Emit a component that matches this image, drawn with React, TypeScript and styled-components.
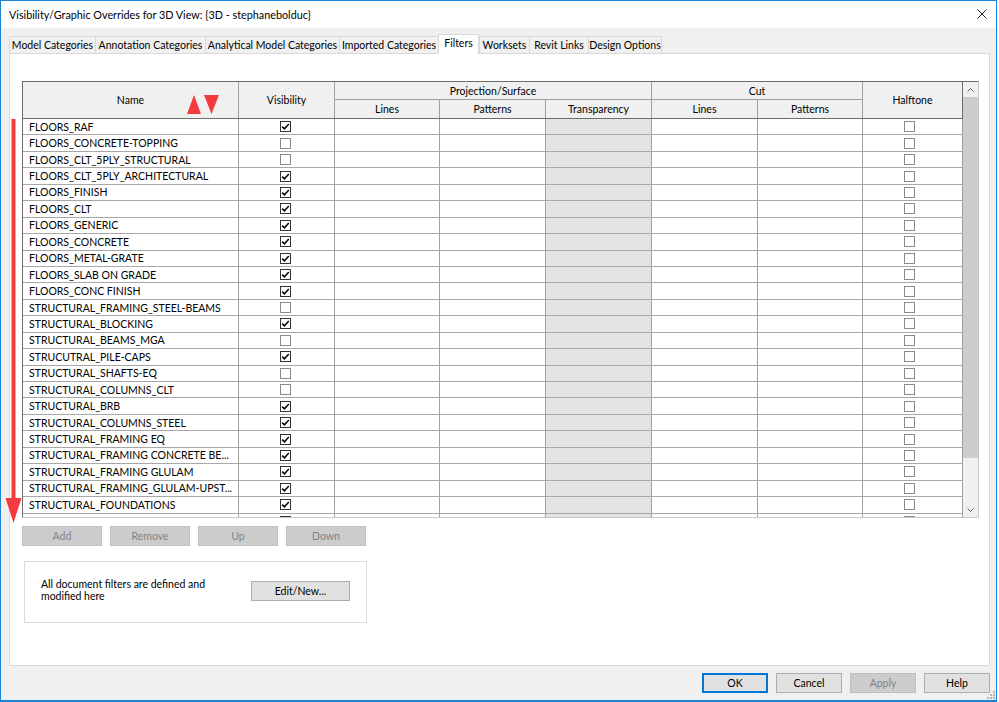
import React from "react";
import styled, { createGlobalStyle } from "styled-components";

const FONT = `Lato, "Liberation Sans", Arial, sans-serif`;
const FS = "10.5px";

const GlobalStyle = createGlobalStyle`
  html, body { margin: 0; padding: 0; background: #ffffff; }
  body { font-family: ${FONT}; font-size: ${FS}; color: #000; }
  * { box-sizing: border-box; }
`;

const COLS = [216, 96, 105, 106, 106, 106, 105, 100];
const GRID = COLS.map((c) => `${c}px`).join(" ");

const Window = styled.div`
  position: relative;
  width: 997px;
  height: 702px;
  border: 1px solid #1883d7;
  border-bottom-width: 2px;
  background: #f0f0f0;
  display: flex;
  flex-direction: column;
`;

const TitleBar = styled.div`
  flex: none;
  height: 27px;
  background: #ffffff;
  display: flex;
  align-items: center;
  justify-content: space-between;
  padding: 0 9px 1px 8px;
`;

const Title = styled.span`
  font-size: 10.8px;
  color: #000;
`;

const Body = styled.div`
  flex: 1;
  min-height: 0;
  display: flex;
  flex-direction: column;
  padding: 8px 6px 0 8px;
`;

const TabStrip = styled.div`
  flex: none;
  height: 17px;
  display: flex;
  align-items: flex-end;
  position: relative;
  z-index: 1;
`;

const Tab = styled.div<{ $w: number; $active?: boolean }>`
  width: ${(p) => p.$w}px;
  height: ${(p) => (p.$active ? 20 : 17)}px;
  margin-bottom: ${(p) => (p.$active ? -1 : 0)}px;
  background: ${(p) => (p.$active ? "#ffffff" : "#f0f0f0")};
  border: 1px solid #d9d9d9;
  border-bottom: none;
  border-right: ${(p) => (p.$active ? "1px solid #d9d9d9" : "none")};
  display: flex;
  align-items: center;
  justify-content: center;
  padding-bottom: ${(p) => (p.$active ? 3 : 0)}px;
  font-size: ${FS};
  white-space: nowrap;
  &:last-child {
    border-right: 1px solid #d9d9d9;
  }
`;

const Panel = styled.div`
  flex: 1;
  min-height: 0;
  background: #ffffff;
  border: 1px solid #d9d9d9;
  padding: 27px 10px 0 12px;
  display: flex;
  flex-direction: column;
`;

const TableFrame = styled.div`
  flex: none;
  width: 957px;
  height: 437px;
  display: flex;
  border-top: 1px solid #6d6d6d;
  border-left: 1px solid #6d6d6d;
  border-right: 1px solid #c8c8c8;
  border-bottom: 1px solid #c8c8c8;
`;

const GridArea = styled.div`
  width: 940px;
  overflow: hidden;
`;

const HeaderGrid = styled.div`
  display: grid;
  grid-template-columns: ${GRID};
  grid-template-rows: 18px 18px;
  background: #f0f0f0;
  border-bottom: 1px solid #6d6d6d;
`;

const HeadCell = styled.div<{ $col: string; $row: string; $line?: boolean; $dark?: boolean }>`
  position: relative;
  grid-column: ${(p) => p.$col};
  grid-row: ${(p) => p.$row};
  display: flex;
  align-items: center;
  justify-content: center;
  border-right: 1px solid ${(p) => (p.$dark ? "#6d6d6d" : "#a0a0a0")};
  border-bottom: ${(p) => (p.$line ? "1px solid #a0a0a0" : "none")};
  font-size: ${FS};
  white-space: nowrap;
`;

const SortArrows = styled.svg`
  position: absolute;
  left: 164px;
  top: 12px;
`;

const Row = styled.div`
  display: grid;
  grid-template-columns: ${GRID};
  height: 16.44px;
  border-bottom: 1px solid #a8a8a8;
`;

const Cell = styled.div<{ $shade?: boolean; $center?: boolean; $shift?: number }>`
  display: flex;
  align-items: center;
  justify-content: ${(p) => (p.$center ? "center" : "flex-start")};
  padding-left: ${(p) => (p.$center ? 0 : 6)}px;
  padding-right: ${(p) => p.$shift ?? 0}px;
  background: ${(p) => (p.$shade ? "#e3e3e3" : "#ffffff")};
  border-right: 1px solid #a0a0a0;
  font-size: ${FS};
  white-space: nowrap;
  overflow: hidden;
`;

const Box = styled.span<{ $checked: boolean }>`
  width: 11px;
  height: 11px;
  border: 1px solid ${(p) => (p.$checked ? "#333333" : "#8a8a8a")};
  background: #ffffff;
  display: flex;
  align-items: center;
  justify-content: center;
`;

const ScrollBar = styled.div`
  width: 15px;
  background: #f0f0f0;
  display: flex;
  flex-direction: column;
`;

const ScrollArrow = styled.div`
  flex: none;
  height: 15px;
  display: flex;
  align-items: center;
  justify-content: center;
`;

const ScrollTrack = styled.div`
  flex: 1;
`;

const Thumb = styled.div`
  height: 361px;
  background: #cdcdcd;
`;

const ButtonRow = styled.div`
  display: flex;
  gap: 8px;
  margin-top: 8px;
`;

const Btn = styled.button<{ $w: number; $variant?: "normal" | "primary" | "disabled" }>`
  width: ${(p) => p.$w}px;
  height: 20px;
  padding: 0;
  font-family: ${FONT};
  font-size: ${FS};
  background: ${(p) => (p.$variant === "disabled" ? "#cccccc" : "#e1e1e1")};
  color: ${(p) => (p.$variant === "disabled" ? "#838383" : "#000000")};
  border: 1px solid
    ${(p) =>
      p.$variant === "primary" ? "#0078d7" : p.$variant === "disabled" ? "#bfbfbf" : "#adadad"};
  box-shadow: ${(p) => (p.$variant === "primary" ? "inset 0 0 0 1px #0078d7" : "none")};
  cursor: default;
`;

const InfoBox = styled.div`
  width: 343px;
  height: 62px;
  margin: 15px 0 0 2px;
  border: 1px solid #dcdcdc;
  display: flex;
  align-items: center;
  justify-content: space-between;
  padding: 0 16px 2px 16px;
`;

const InfoText = styled.div`
  font-size: ${FS};
  line-height: 12px;
  white-space: nowrap;
  margin-bottom: 3px;
`;

const Footer = styled.div`
  flex: none;
  height: 34px;
  display: flex;
  justify-content: flex-end;
  align-items: flex-start;
  gap: 8px;
  padding: 7px 6px 0 0;
`;

const Annotation = styled.svg`
  position: absolute;
  left: 4px;
  top: 118px;
`;

const Grip = styled.svg`
  position: absolute;
  right: 0px;
  bottom: 0px;
`;

type Item = { name: string; vis: boolean };

const ITEMS: Item[] = [
  { name: "FLOORS_RAF", vis: true },
  { name: "FLOORS_CONCRETE-TOPPING", vis: false },
  { name: "FLOORS_CLT_5PLY_STRUCTURAL", vis: false },
  { name: "FLOORS_CLT_5PLY_ARCHITECTURAL", vis: true },
  { name: "FLOORS_FINISH", vis: true },
  { name: "FLOORS_CLT", vis: true },
  { name: "FLOORS_GENERIC", vis: true },
  { name: "FLOORS_CONCRETE", vis: true },
  { name: "FLOORS_METAL-GRATE", vis: true },
  { name: "FLOORS_SLAB ON GRADE", vis: true },
  { name: "FLOORS_CONC FINISH", vis: true },
  { name: "STRUCTURAL_FRAMING_STEEL-BEAMS", vis: false },
  { name: "STRUCTURAL_BLOCKING", vis: true },
  { name: "STRUCTURAL_BEAMS_MGA", vis: false },
  { name: "STRUCUTRAL_PILE-CAPS", vis: true },
  { name: "STRUCTURAL_SHAFTS-EQ", vis: false },
  { name: "STRUCTURAL_COLUMNS_CLT", vis: false },
  { name: "STRUCTURAL_BRB", vis: true },
  { name: "STRUCTURAL_COLUMNS_STEEL", vis: true },
  { name: "STRUCTURAL_FRAMING EQ", vis: true },
  { name: "STRUCTURAL_FRAMING CONCRETE BE...", vis: true },
  { name: "STRUCTURAL_FRAMING GLULAM", vis: true },
  { name: "STRUCTURAL_FRAMING_GLULAM-UPST...", vis: true },
  { name: "STRUCTURAL_FOUNDATIONS", vis: true },
  { name: "", vis: true },
];

const TABS = [
  { label: "Model Categories", w: 86 },
  { label: "Annotation Categories", w: 110 },
  { label: "Analytical Model Categories", w: 134 },
  { label: "Imported Categories", w: 99 },
  { label: "Filters", w: 41, active: true },
  { label: "Worksets", w: 50 },
  { label: "Revit Links", w: 59 },
  { label: "Design Options", w: 74 },
];

function Check({ on }: { on: boolean }) {
  return (
    <Box $checked={on}>
      {on && (
        <svg width="9" height="9" viewBox="0 0 9 9">
          <polyline points="1.2,4.6 3.4,6.8 7.8,2" fill="none" stroke="#000" strokeWidth="1.5" />
        </svg>
      )}
    </Box>
  );
}

export default function App() {
  return (
    <>
      <GlobalStyle />
      <Window>
        <TitleBar>
          <Title>Visibility/Graphic Overrides for 3D View: {"{3D - stephanebolduc}"}</Title>
          <svg width="10" height="10" viewBox="0 0 10 10">
            <path d="M0.5 0.5 L9.5 9.5 M9.5 0.5 L0.5 9.5" stroke="#222" strokeWidth="1" />
          </svg>
        </TitleBar>
        <Body>
          <TabStrip>
            {TABS.map((t) => (
              <Tab key={t.label} $w={t.w} $active={t.active}>
                {t.label}
              </Tab>
            ))}
          </TabStrip>
          <Panel>
            <TableFrame>
              <GridArea>
                <HeaderGrid>
                  <HeadCell $col="1" $row="1 / span 2">
                    Name
                    <SortArrows width="33" height="20" viewBox="0 0 33 20">
                      <polygon points="0,20 7,1 14,20" fill="#f23a3f" />
                      <polygon points="17,1 32,1 24.5,20" fill="#f23a3f" />
                    </SortArrows>
                  </HeadCell>
                  <HeadCell $col="2" $row="1 / span 2">Visibility</HeadCell>
                  <HeadCell $col="3 / span 3" $row="1" $line>Projection/Surface</HeadCell>
                  <HeadCell $col="6 / span 2" $row="1" $line>Cut</HeadCell>
                  <HeadCell $col="8" $row="1 / span 2" $dark>Halftone</HeadCell>
                  <HeadCell $col="3" $row="2">Lines</HeadCell>
                  <HeadCell $col="4" $row="2">Patterns</HeadCell>
                  <HeadCell $col="5" $row="2">Transparency</HeadCell>
                  <HeadCell $col="6" $row="2">Lines</HeadCell>
                  <HeadCell $col="7" $row="2">Patterns</HeadCell>
                </HeaderGrid>
                {ITEMS.map((it, i) => (
                  <Row key={i}>
                    <Cell>{it.name}</Cell>
                    <Cell $center $shift={2}>
                      <Check on={it.vis} />
                    </Cell>
                    <Cell />
                    <Cell />
                    <Cell $shade />
                    <Cell />
                    <Cell />
                    <Cell $center $shift={7}>
                      <Check on={false} />
                    </Cell>
                  </Row>
                ))}
              </GridArea>
              <ScrollBar>
                <ScrollArrow>
                  <svg width="7" height="4" viewBox="0 0 7 4">
                    <polyline points="0.5,3.5 3.5,0.5 6.5,3.5" fill="none" stroke="#606060" strokeWidth="1" />
                  </svg>
                </ScrollArrow>
                <ScrollTrack>
                  <Thumb />
                </ScrollTrack>
                <ScrollArrow>
                  <svg width="7" height="4" viewBox="0 0 7 4">
                    <polyline points="0.5,0.5 3.5,3.5 6.5,0.5" fill="none" stroke="#606060" strokeWidth="1" />
                  </svg>
                </ScrollArrow>
              </ScrollBar>
            </TableFrame>
            <ButtonRow>
              <Btn $w={80} $variant="disabled">Add</Btn>
              <Btn $w={80} $variant="disabled">Remove</Btn>
              <Btn $w={80} $variant="disabled">Up</Btn>
              <Btn $w={80} $variant="disabled">Down</Btn>
            </ButtonRow>
            <InfoBox>
              <InfoText>
                All document filters are defined and
                <br />
                modified here
              </InfoText>
              <Btn $w={99}>Edit/New...</Btn>
            </InfoBox>
          </Panel>
        </Body>
        <Footer>
          <Btn $w={66} $variant="primary">OK</Btn>
          <Btn $w={66}>Cancel</Btn>
          <Btn $w={66} $variant="disabled">Apply</Btn>
          <Btn $w={66}>Help</Btn>
        </Footer>
        <Annotation width="17" height="405" viewBox="0 0 17 405">
          <rect x="6.5" y="0" width="4" height="382" fill="#f23a3f" />
          <polygon points="0.5,379 16.5,379 8.5,404" fill="#f23a3f" />
        </Annotation>
        <Grip width="10" height="10" viewBox="0 0 10 10">
          <rect x="7" y="1" width="2" height="2" fill="#b5b5b5" />
          <rect x="4" y="4" width="2" height="2" fill="#b5b5b5" />
          <rect x="7" y="4" width="2" height="2" fill="#b5b5b5" />
          <rect x="1" y="7" width="2" height="2" fill="#b5b5b5" />
          <rect x="4" y="7" width="2" height="2" fill="#b5b5b5" />
          <rect x="7" y="7" width="2" height="2" fill="#b5b5b5" />
        </Grip>
      </Window>
    </>
  );
}
